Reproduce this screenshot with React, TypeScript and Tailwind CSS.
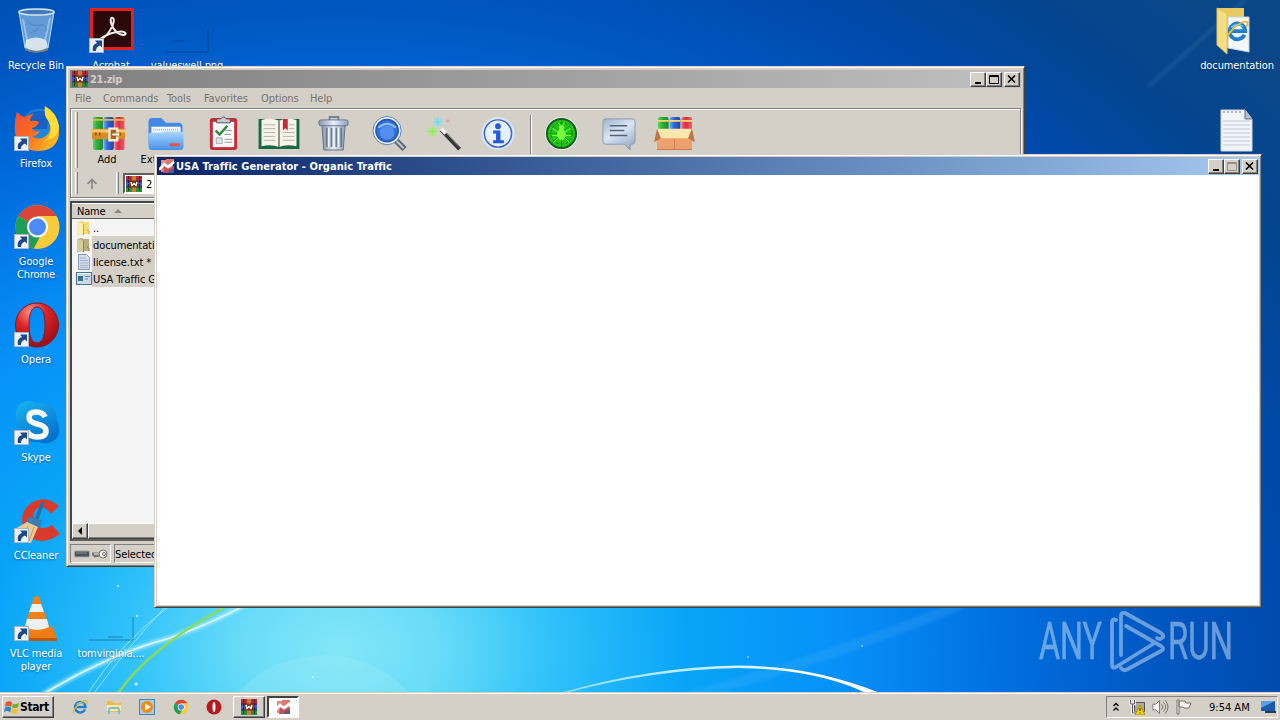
import type { ReactNode } from 'react';
import clsx from 'clsx';

const MENU = [
  { label: 'File', width: 'w-[28px]' },
  { label: 'Commands', width: 'w-[64px]' },
  { label: 'Tools', width: 'w-[37px]' },
  { label: 'Favorites', width: 'w-[57px]' },
  { label: 'Options', width: 'w-[49px]' },
  { label: 'Help', width: 'w-[30px]' },
];

const RAISED = 'bg-[#d4d0c8] border border-t-white border-l-white border-r-[#404040] border-b-[#404040] shadow-[inset_-1px_-1px_0_#808080]';

function ShortcutArrow() {
  return (
    <g>
      <rect x="1.500" y="31.500" width="14" height="14" fill="#eef3fa" stroke="#a9b5c6" />
      <path d="M5 44c-1-5 1-7 4-8L7 33.500h7v7l-2-2c-3 1-4 3-4 5.500z" fill="#1c4a88" />
    </g>
  );
}

function Books() {
  return (
    <svg viewBox="0 0 36 36" className="h-full w-full">
      <rect x="2" y="1" width="10.500" height="34" rx="2" fill="url(#bookgreen)" />
      <rect x="13" y="1" width="10.500" height="34" rx="2" fill="url(#bookblue)" />
      <rect x="24" y="1" width="10.500" height="34" rx="2" fill="url(#bookred)" />
      <path d="M2 4h10.500M13 4h10.500M24 4h10.500" stroke="#e8b93c" strokeWidth="2" />
      <rect x="1" y="13" width="34" height="11" rx="1" fill="#d98a22" />
      <path d="M1 15.500h34" stroke="#fac867" strokeWidth="3" />
      <path d="M5 17v3M9 17v3M30 17v3" stroke="#8d540e" strokeWidth="1.500" />
      <path d="M27 17v-4h-8v12h8v-4" fill="#a96122" stroke="#fdeed2" strokeWidth="2.500" />
      <path d="M22 19h7" stroke="#fff" strokeWidth="2" />
    </svg>
  );
}

function RarIcon() {
  return (
    <svg viewBox="0 0 16 16" className="h-4 w-4 shrink-0">
      <rect width="16" height="16" fill="#2c2440" />
      <rect width="16" height="4.500" fill="#b32942" />
      <rect y="5.500" width="16" height="5" fill="#3b58c4" />
      <rect y="11.500" width="16" height="4.500" fill="#26913b" />
      <path d="M2.500 0v16M13.500 0v16" stroke="#160e22" strokeDasharray="3 1" opacity=".7" />
      <rect x="6" width="4" height="16" fill="#d07a34" />
      <rect x="3.500" y="4.500" width="9" height="7" fill="#7b3214" />
      <path d="M5 6l1 3.500 2-2 2 2L11 6" stroke="#fff" strokeWidth="1.400" fill="none" />
    </svg>
  );
}

function TrafficIcon() {
  return (
    <svg viewBox="0 0 16 16" className="h-4 w-4 shrink-0">
      <rect x="2" y="2" width="12" height="12" fill="#dd8c86" />
      <rect x="7" y="1" width="8" height="5" fill="#e0766a" />
      <path d="M5 9l6 1 4-2v7H4z" fill="#c4525a" />
      <path d="M10 12l5-1v4h-6z" fill="#54598f" />
      <path d="M0 12l5-6 4 3 6-5" stroke="#fff" strokeWidth="2.600" fill="none" />
    </svg>
  );
}

function FolderIcon({ dim = false }: { dim?: boolean }) {
  return (
    <svg viewBox="0 0 16 16" className="h-4 w-4 shrink-0">
      <path d="M1 2l5-1 2 1h5v12H8l-7 1z" fill={dim ? '#b9ae78' : '#f4d978'} />
      <path d="M1 2l6 2v11l-6-1z" fill={dim ? '#d5cda0' : '#fcefaa'} />
      <path d="M7.500 4v11M11 10l2 1v3" stroke={dim ? '#8b8460' : '#c9a545'} fill="none" />
    </svg>
  );
}

function PageIcon() {
  return (
    <svg viewBox="0 0 16 16" className="h-4 w-4 shrink-0">
      <path d="M2.500.500h8l3 3v12h-11z" fill="#d3dce8" stroke="#8a9ab2" />
      <path d="M4 4h6M4 6.500h8M4 9h8M4 11.500h8M4 13.500h8" stroke="#a3b4ca" />
    </svg>
  );
}

function ExeIcon() {
  return (
    <svg viewBox="0 0 16 16" className="h-4 w-4 shrink-0">
      <rect x=".5" y="1.500" width="15" height="12" fill="#c9dbea" stroke="#50708f" />
      <path d="M1 2.500h14" stroke="#e9f4ff" />
      <rect x="2" y="5" width="5" height="5" fill="#3a7386" />
      <path d="M9 5.500h5M9 8h3" stroke="#6788a9" />
    </svg>
  );
}

function TrashIcon() {
  return (
    <svg viewBox="0 0 36 36" className="h-full w-full">
      <path d="M14 4V1h9v3" fill="none" stroke="#77838f" strokeWidth="2" />
      <path d="M6 9h24l-2 26H8z" fill="url(#steel)" stroke="#657282" />
      <path d="M11 12v20M16 12v20M21 12v20M26 12v20" stroke="#6c7d91" strokeWidth="2" />
      <path d="M13 12v20M18 12v20M23 12v20" stroke="#edf5ff" strokeWidth="1.500" />
      <rect x="3" y="4" width="30" height="6" rx="2" fill="url(#steel)" stroke="#68788b" />
    </svg>
  );
}

function ExtractIcon() {
  return (
    <svg viewBox="0 0 38 36" className="h-full w-full">
      <path d="M1 6q0-4 4-4h9l5 5h13q4 0 4 4v17H1z" fill="#4389e4" />
      <path d="M4 11h30v10H4z" fill="#f7fbff" />
      <path d="M6 14h26" stroke="#9bb1ce" strokeWidth="2" strokeDasharray="1 1" />
      <path d="M1 19q1-2 3-2h10l3-1h17q3 0 3 3v12q0 4-4 4H5q-4 0-4-4z" fill="url(#folderblue)" />
      <rect x="23" y="28" width="10" height="3" rx="1" fill="#e65345" />
    </svg>
  );
}

function TestIcon() {
  return (
    <svg viewBox="0 0 36 36" className="h-full w-full">
      <rect x="4" y="2" width="28" height="33" rx="3" fill="#c42b36" />
      <path d="M7 6h22v26H7z" fill="#f8fafb" />
      <path d="M11 7V3h4q3-4 6 0h4v4z" fill="#c8c8cd" stroke="#54545c" />
      <path d="M10 15l4 4 8-9" fill="none" stroke="#31843b" strokeWidth="2.500" />
      <path d="M20 15h7M19 19h7M19 24h8M19 27h8" stroke="#93999f" />
      <rect x="10.500" y="22.500" width="6" height="6" fill="#e2e5e8" stroke="#a7adb2" />
    </svg>
  );
}

function BookIcon() {
  return (
    <svg viewBox="0 0 44 36" className="h-full w-full">
      <path d="M1 3h42v31H1z" fill="#176944" />
      <path d="M4 4q11-3 18 1 7-4 18-1v27q-11-2-18 1-7-3-18-1z" fill="#f6f4e9" />
      <path d="M22 5v27" stroke="#918f83" strokeWidth="2" />
      <path d="M6 9h12M6 13h12M6 17h12M6 21h12M6 25h12M26 17h12M26 21h12M26 25h12M32 9h6M32 13h6" stroke="#b2b5ac" />
      <path d="M26 3h5v12l-2.500-2.500L26 15z" fill="#c92a36" />
    </svg>
  );
}

function FindIcon() {
  return (
    <svg viewBox="0 0 36 36" className="h-full w-full">
      <path d="M24 24l10 10" stroke="#626b77" strokeWidth="6" />
      <path d="M24 24l9 9" stroke="#c6cbd1" strokeWidth="2" />
      <circle cx="16" cy="15" r="14.500" fill="#e9f2fc" stroke="#5f7fb4" />
      <circle cx="16" cy="15" r="11.500" fill="#2f6fdc" stroke="#2355ae" strokeWidth="1.500" />
      <circle cx="16" cy="17" r="7.500" fill="#5f9df0" opacity=".7" />
      <path d="M7 12q9-8 18 0" fill="none" stroke="#8dbcf8" strokeWidth="2" />
    </svg>
  );
}

function WizardIcon() {
  return (
    <svg viewBox="0 0 36 36" className="h-full w-full">
      <circle cx="6" cy="16" r="5" fill="#a8f36a" opacity=".5" />
      <circle cx="12" cy="6" r="4" fill="#70eff5" opacity=".5" />
      <path d="M12 1v10M7 6h10M8 2l8 8M16 2l-8 8" stroke="#72dbeb" />
      <path d="M6 11v10M1 16h10M3 13l6 6M9 13l-6 6" stroke="#91e861" />
      <path d="M22 3v4M20 5h4" stroke="#f08b9b" />
      <path d="M15 14l19 20" stroke="#353535" strokeWidth="4" />
      <path d="M15 13l5 5" stroke="#eee" strokeWidth="4" />
      <path d="M20 17l14 15" stroke="#969696" />
    </svg>
  );
}

function InfoIcon() {
  return (
    <svg viewBox="0 0 36 36" className="h-full w-full">
      <circle cx="18" cy="18" r="17" fill="#d7e5f8" />
      <circle cx="18" cy="18" r="14" fill="#e6f0ff" stroke="#3f65bd" strokeWidth="1.500" />
      <circle cx="18" cy="10.500" r="3" fill="#275bdc" />
      <path d="M13 15h7.500v10H24v3H13v-3h3v-7h-3z" fill="#2459da" />
    </svg>
  );
}

function VirusIcon() {
  return (
    <svg viewBox="0 0 36 36" className="h-full w-full">
      <circle cx="18" cy="18" r="17" fill="#e2eee0" />
      <circle cx="18" cy="18" r="15" fill="#23c719" stroke="#155a23" strokeWidth="2" />
      <g stroke="#087c0d" fill="none">
        <circle cx="18" cy="18" r="11" strokeDasharray="3 2" />
        <path d="M18 3v30M3 18h30M8 8l20 20M28 8L8 28" opacity=".5" />
      </g>
      <g stroke="#7bfc42" fill="#7bfc42">
        <ellipse cx="18" cy="19" rx="4" ry="5.500" />
        <circle cx="18" cy="12" r="2.200" />
        <path d="M14 16l-5-3M22 16l5-3M14 20H8M22 20h6M14 23l-4 4M22 23l4 4M17 10l-2-3M19 10l2-3" fill="none" />
      </g>
    </svg>
  );
}

function CommentIcon() {
  return (
    <svg viewBox="0 0 36 36" className="h-full w-full">
      <path d="M5 3h27q3 0 3 3v20q0 3-3 3h-2v6l-6-6H5q-3 0-3-3V6q0-3 3-3z" fill="url(#bubble)" stroke="#899bb2" />
      <path d="M9 10h18M9 15h15M9 20h18" stroke="#51647e" strokeWidth="1.500" />
    </svg>
  );
}

function SfxIcon() {
  return (
    <svg viewBox="0 0 42 36" className="h-full w-full">
      <rect x="4" y="1" width="11" height="15" rx="2" fill="url(#bookgreen)" />
      <rect x="16" y="1" width="11" height="15" rx="2" fill="url(#bookblue)" />
      <rect x="28" y="1" width="11" height="15" rx="2" fill="url(#bookred)" />
      <path d="M4 5h11M16 5h11M28 5h11" stroke="#ffd66b" strokeWidth="2" />
      <path d="M3 16h36v19H3z" fill="#eea06e" />
      <path d="M3 13h36l-4 10H7z" fill="#fde7ad" />
      <path d="M3 13l4 10-7 4zM39 13l-4 10 7 4z" fill="#bd754b" />
      <path d="M21 24v11M3 34.500h36" stroke="#c87c50" />
    </svg>
  );
}

// Only the first two buttons carry a caption, the rest of that row sits under the browser window.
const TOOLS: { icon: ReactNode; label?: string; width: string; size: string }[] = [
  { icon: <Books />, label: 'Add', width: 'w-[58px]', size: 'w-[35px]' },
  { icon: <ExtractIcon />, label: 'Extract To', width: 'w-[58px]', size: 'w-[38px]' },
  { icon: <TestIcon />, width: 'w-[57px]', size: 'w-[35px]' },
  { icon: <BookIcon />, width: 'w-[53px]', size: 'w-[44px]' },
  { icon: <TrashIcon />, width: 'w-[57px]', size: 'w-[35px]' },
  { icon: <FindIcon />, width: 'w-[53px]', size: 'w-[36px]' },
  { icon: <WizardIcon />, width: 'w-[58px]', size: 'w-[36px]' },
  { icon: <InfoIcon />, width: 'w-[50px]', size: 'w-[36px]' },
];

const EXTRA_TOOLS = [
  { icon: <VirusIcon />, width: 'w-[57px]', size: 'w-[35px]' },
  { icon: <CommentIcon />, width: 'w-[57px]', size: 'w-[35px]' },
  { icon: <SfxIcon />, width: 'w-[54px]', size: 'w-[41px]' },
];

function Tool({ icon, label, width, size }: (typeof TOOLS)[number]) {
  return (
    <div className={clsx('flex shrink-0 flex-col items-center', width)}>
      <div className={clsx('mt-px ml-[2px] h-[35px]', size)}>{icon}</div>
      {label && <span className="mt-[2px] leading-[13px] whitespace-nowrap">{label}</span>}
    </div>
  );
}

function Caption({ kind, disabled = false }: { kind: 'min' | 'max' | 'close'; disabled?: boolean }) {
  return (
    <div className={clsx('flex h-[15px] w-4 items-center justify-center', RAISED)}>
      <svg viewBox="0 0 12 11" className="h-[11px] w-3" fill="none" stroke={disabled ? '#969087' : '#000'}>
        {kind === 'min' && <path d="M3 9h6" strokeWidth="2" />}
        {kind === 'max' && <path d="M1.500 1.500h9v8h-9zM1 2.500h10" />}
        {kind === 'close' && <path d="M2 1.500l7 7M9 1.500l-7 7" strokeWidth="1.600" />}
      </svg>
    </div>
  );
}

function Captions({ maxDisabled = false }: { maxDisabled?: boolean }) {
  return (
    <div className="ml-auto flex pr-px">
      <Caption kind="min" />
      <Caption kind="max" disabled={maxDisabled} />
      <div className="w-[2px]" />
      <Caption kind="close" />
    </div>
  );
}

function FileRow({ icon, name, selected = false }: { icon: ReactNode; name: string; selected?: boolean }) {
  return (
    <div className="flex h-[17px] items-center pl-1">
      {icon}
      <span className={clsx('h-[17px] flex-1 pl-px leading-[20px] tracking-[-0.100px] whitespace-nowrap', selected && 'bg-[#d4d0c8]')}>{name}</span>
    </div>
  );
}

function ArchiveWindow() {
  return (
    <div className="absolute top-[66px] left-[66px] flex h-[501px] w-[959px] flex-col overflow-hidden border border-t-[#d4d0c8] border-r-[#404040] border-b-[#404040] border-l-[#d4d0c8] bg-[#d4d0c8] p-[3px] shadow-[inset_1px_1px_0_#fff,inset_-1px_-1px_0_#808080]">
      <div className="flex h-[18px] shrink-0 items-center bg-linear-to-r from-[#808080] to-[#c0c0c0] pl-[2px] font-bold text-[#d4d0c8]">
        <RarIcon />
        <span className="ml-[2px] tracking-[-0.300px]">21.zip</span>
        <Captions />
      </div>
      <div className="flex h-5 shrink-0 items-center pl-[5px] tracking-[-0.080px] text-[#77736c]">
        {MENU.map((item) => (
          <span key={item.label} className={clsx('whitespace-nowrap', item.width)}>
            {item.label}
          </span>
        ))}
      </div>
      <div className="flex h-[90px] shrink-0 flex-col border border-[#808080] shadow-[inset_1px_1px_0_#fff,1px_1px_0_#fff]">
        <div className="flex h-[61px] pt-[6px] pl-1">
          <div className="mt-[-3px] h-14 w-[3px] border-r border-l border-r-[#808080] border-l-white" />
          {TOOLS.map((tool, i) => (
            <Tool key={i} {...tool} />
          ))}
          <div className="ml-2 h-[52px] w-[2px] border-r border-l border-r-white border-l-[#808080]" />
          {EXTRA_TOOLS.map((tool, i) => (
            <Tool key={i} {...tool} />
          ))}
        </div>
        <div className="flex h-[26px] items-center pl-1">
          <div className="h-[22px] w-[3px] border-r border-l border-r-[#808080] border-l-white" />
          <svg viewBox="0 0 12 12" className="mt-[2px] ml-2 h-3 w-3" fill="none" stroke="#8b8781" strokeWidth="1.700">
            <path d="M6 11V1M1.500 6L6 1.500 10.500 6" />
          </svg>
          <div className="ml-[18px] h-[22px] w-[3px] border-r border-l border-r-[#808080] border-l-white" />
          <div className="mt-px ml-[4px] flex h-[21px] flex-1 items-center border-2 border-t-[#606060] border-r-white border-b-white border-l-[#606060] bg-white pl-px">
            <RarIcon />
            <span className="mt-px ml-[4px] tracking-[1px] whitespace-nowrap">21.zip</span>
          </div>
        </div>
      </div>
      <div className="mt-[3px] flex h-[340px] shrink-0 flex-col border-2 border-t-[#404850] border-r-white border-b-[#606060] border-l-[#404850] bg-[#f5f5f5]">
        <div className="flex h-[16px] shrink-0 items-center border-b border-b-[#606060] bg-[#d4d0c8] pl-[5px] shadow-[inset_0_1px_0_#fff]">
          <span className="pt-[2px] tracking-[-0.200px]">Name</span>
          <svg viewBox="0 0 8 4" className="ml-[9px] h-1 w-2">
            <path d="M0 4l4-4 4 4z" fill="#8b8780" />
          </svg>
        </div>
        <FileRow icon={<FolderIcon />} name=".." />
        <FileRow icon={<FolderIcon dim />} name="documentation" selected />
        <FileRow icon={<PageIcon />} name="license.txt *" selected />
        <FileRow icon={<ExeIcon />} name="USA Traffic Generator" selected />
        <div className="mt-auto flex h-4 shrink-0 bg-[#ece9e4]">
          <div className={clsx('flex w-4 items-center justify-center', RAISED)}>
            <svg viewBox="0 0 4 8" className="h-2 w-1">
              <path d="M4 0v8L0 4z" fill="#000" />
            </svg>
          </div>
          <div className={clsx('w-[500px]', RAISED)} />
        </div>
      </div>
      <div className="mt-[3px] flex h-[19px] shrink-0 gap-[3px]">
        <div className="flex w-[41px] items-center gap-[2px] border border-t-[#808080] border-r-white border-b-white border-l-[#808080] pl-[3px]">
          <svg viewBox="0 0 16 8" className="h-2 w-4">
            <rect x=".5" y="1" width="15" height="6" rx="1" fill="#4b5558" stroke="#a3abad" />
            <path d="M2 3h11" stroke="#849195" />
          </svg>
          <svg viewBox="0 0 16 10" className="h-[10px] w-4" fill="none">
            <path d="M9 5H1l2 2 2-1 2 1" stroke="#77736e" strokeWidth="3" />
            <path d="M9 5H2" stroke="#fff" />
            <circle cx="11" cy="5" r="4" fill="#f2f0ec" stroke="#77736e" />
            <circle cx="12" cy="5" r="1.500" stroke="#77736e" />
          </svg>
        </div>
        <div className="flex-1 border border-t-[#808080] border-r-white border-b-white border-l-[#808080] leading-[19px] tracking-[-0.100px] whitespace-nowrap">
          Selected
        </div>
      </div>
    </div>
  );
}

function TrafficWindow() {
  return (
    <div className="absolute top-[154px] left-[154px] flex h-[454px] w-[1108px] flex-col border border-t-[#d4d0c8] border-r-[#404040] border-b-[#404040] border-l-[#d4d0c8] bg-[#d4d0c8] p-[2px] shadow-[inset_1px_1px_0_#fff,inset_-1px_-1px_0_#808080]">
      <div className="flex h-[18px] shrink-0 items-center bg-linear-to-r from-[#0a246a] to-[#a6caf0] pl-[2px] font-bold text-white">
        <TrafficIcon />
        <span className="ml-px tracking-[0.050px] whitespace-nowrap">USA Traffic Generator - Organic Traffic</span>
        <Captions maxDisabled />
      </div>
      <div className="flex-1 bg-white" />
    </div>
  );
}

function Wallpaper() {
  return (
    <svg viewBox="0 0 1280 720" className="absolute inset-0 h-[720px] w-[1280px]">
      <defs>
        <radialGradient id="sky" gradientUnits="userSpaceOnUse" cx="0" cy="0" r="1" gradientTransform="translate(340 650) scale(1200 936)">
          <stop offset="0" stopColor="#83e6f7" />
          <stop offset=".083" stopColor="#68dcf8" />
          <stop offset=".175" stopColor="#31c2fa" />
          <stop offset=".29" stopColor="#08a4f8" />
          <stop offset=".42" stopColor="#0790f7" />
          <stop offset=".55" stopColor="#0070e0" />
          <stop offset=".68" stopColor="#0057c2" />
          <stop offset=".79" stopColor="#004aac" />
          <stop offset=".89" stopColor="#034590" />
          <stop offset="1" stopColor="#0b4788" />
        </radialGradient>
        <linearGradient id="arc">
          <stop stopColor="#8fdcff" />
          <stop offset=".6" stopColor="#d8f4ff" />
          <stop offset=".75" stopColor="#fff" />
        </linearGradient>
        <linearGradient id="steel" x2="1">
          <stop stopColor="#8396ad" />
          <stop offset=".5" stopColor="#e6effa" />
          <stop offset="1" stopColor="#8da1bd" />
        </linearGradient>
        <linearGradient id="bubble" x2=".6" y2="1">
          <stop stopColor="#9fb3cc" />
          <stop offset=".5" stopColor="#dbe6f4" />
          <stop offset="1" stopColor="#9fb3cf" />
        </linearGradient>
        <linearGradient id="bookgreen">
          <stop stopColor="#5fd65a" />
          <stop offset=".4" stopColor="#2fae3c" />
          <stop offset="1" stopColor="#1c8a33" />
        </linearGradient>
        <linearGradient id="bookblue">
          <stop stopColor="#6fa8fa" />
          <stop offset=".4" stopColor="#2f66dc" />
          <stop offset="1" stopColor="#1f479f" />
        </linearGradient>
        <linearGradient id="bookred">
          <stop stopColor="#ff6f7c" />
          <stop offset=".4" stopColor="#dc2c44" />
          <stop offset="1" stopColor="#e8606c" />
        </linearGradient>
        <linearGradient id="folderblue" x2="0" y2="1">
          <stop stopColor="#a9d6ff" />
          <stop offset="1" stopColor="#4790e8" />
        </linearGradient>
        <radialGradient id="operared" cx=".35" cy=".2" r=".9">
          <stop stopColor="#ff9184" />
          <stop offset=".4" stopColor="#dc2428" />
          <stop offset="1" stopColor="#8f0b12" />
        </radialGradient>
        <linearGradient id="fox" x2="1" y2=".6">
          <stop stopColor="#f0503a" />
          <stop offset=".5" stopColor="#ff6a1e" />
          <stop offset="1" stopColor="#ffb624" />
        </linearGradient>
        <linearGradient id="skype" x2=".6" y2="1">
          <stop stopColor="#19b4ee" />
          <stop offset="1" stopColor="#0672cf" />
        </linearGradient>
        <filter id="soft">
          <feGaussianBlur stdDeviation="1.500" />
        </filter>
        <filter id="glow">
          <feGaussianBlur stdDeviation=".6" />
        </filter>
      </defs>
      <rect width="1280" height="720" fill="url(#sky)" />
      <g fill="none" strokeLinecap="round">
        <path d="M690 696Q825 660 960 605" stroke="#55b8ff" strokeWidth="10" opacity=".2" filter="url(#soft)" />
        <path d="M1150 85L1245 0" stroke="#75b4dd" strokeWidth="4" opacity=".12" filter="url(#soft)" />
        <path d="M45 693Q110 654 170 638Q214 623 260 597" stroke="#baf3ff" strokeWidth="5" opacity=".65" filter="url(#soft)" />
        <path d="M45 693Q110 654 170 638Q214 623 260 597" stroke="#dffaff" strokeWidth="1.500" />
        <path d="M88 693Q120 643 172 604M94 693Q125 651 165 607" stroke="#a9eaff" opacity=".8" />
        <path d="M119 692Q150 648 223 608" stroke="#8fda4f" strokeWidth="2.500" />
      </g>
      <path d="M560 693Q650 667 738 665.500C790 666 835 675 880 693L866 693C832 677 792 669 738 668Q650 670 566 693z" fill="url(#arc)" filter="url(#glow)" />
      <path d="M238 692Q270 657 325 655Q375 656 408 692z" fill="#b6f2fa" opacity=".2" />
      <g fill="#d9faff">
        <circle cx="118" cy="586" r="1" />
        <circle cx="137" cy="616" r="1" />
        <circle cx="136" cy="684" r="1.500" />
        <circle cx="313" cy="677" r="1" />
        <circle cx="748" cy="657" r="1" opacity=".6" />
        <circle cx="862" cy="646" r="1" opacity=".6" />
      </g>
    </svg>
  );
}

function Ie() {
  return (
    <g fill="none">
      <path d="M26 21a10.500 10.500 0 1 1 1-5H9" stroke="#1c7fd0" strokeWidth="5" />
      <path d="M8 11q8-7 16-1" stroke="#6cc8f5" strokeWidth="2" />
      <path d="M4 28C-3 25 20 0 30 4q1 3-2 6" stroke="#e9b932" strokeWidth="2.500" />
    </g>
  );
}

function Chrome() {
  return (
    <g>
      <circle cx="24.500" cy="24" r="22" fill="#f9cb3c" />
      <path d="M24.500 24L5.500 13a22 22 0 0 1 38 0h-19z" fill="#dc4437" />
      <path d="M24.500 24l-19-11a22 22 0 0 0 15 33l9-17z" fill="#209d58" />
      <circle cx="24.500" cy="24" r="10.500" fill="#fff" />
      <circle cx="24.500" cy="24" r="8.500" fill="#4c8bf5" />
    </g>
  );
}

function Opera() {
  return <path fillRule="evenodd" fill="url(#operared)" stroke="#8a1719" d="M24 2a21.500 22 0 1 0 0 44 21.500 22 0 1 0 0-44m0 4c5 0 8 6 8 18s-3 18-8 18-8-6-8-18 3-18 8-18" />;
}

const DESKTOP: { label?: string; pos: string; icon: ReactNode; shortcut?: boolean }[] = [
  {
    label: 'Recycle Bin',
    pos: 'left-[-14px] top-[7px]',
    icon: (
      <g>
        <path d="M6 5q17-5 35 0l-6 36q-11 7-23 0z" fill="#a4cbea" fillOpacity=".6" stroke="#b8daf1" />
        <path d="M13 33q10-5 20 0l2 7q-12 8-23 0z" fill="#e5eaed" opacity=".9" />
        <ellipse cx="23.500" cy="5" rx="17.500" ry="3" fill="#4578b4" stroke="#d3eaf8" strokeWidth="1.500" />
        <path d="M10 12l5 26M37 11l-6 27" stroke="#e4f4ff" strokeWidth="2" opacity=".4" />
        <path d="M14 14q6 6 12 4t8 6M18 26l8-5" stroke="#2c62a4" fill="none" opacity=".4" />
        <path d="M12 42q12 6 23 0" stroke="#6f7b84" strokeWidth="2" fill="none" />
      </g>
    ),
  },
  {
    label: 'Acrobat',
    pos: 'left-[61px] top-[7px]',
    shortcut: true,
    icon: (
      <g>
        <rect x="2" y="1" width="44" height="42" fill="#e4221b" />
        <rect x="5" y="4" width="38" height="36" fill="#2a0708" />
        <path d="M12 33c9-4 16-19 13-22-5-3-2 15 10 17 5 0 3-5-6-3-8 1-17 6-17 8z" fill="none" stroke="#f4eeee" strokeWidth="2" />
      </g>
    ),
  },
  {
    label: 'valueswell.png',
    pos: 'left-[137px] top-[7px]',
    icon: <path d="M1 45h43V22M9 34h11" fill="none" stroke="#06337c" opacity=".65" />,
  },
  {
    label: 'Firefox',
    pos: 'left-[-14px] top-[105px]',
    shortcut: true,
    icon: (
      <g>
        <circle cx="26" cy="21" r="17" fill="#1a86e0" />
        <path d="M12 12Q22 3 36 7L34 24H16z" fill="#1a5fc4" />
        <path d="M4 7q5 5 8 5 4-3 9-3-4 3-4 7 6-1 9 1-2 5-7 6 1 4 8 3-3 5-8 5 8 6 16-2Q41 20 32 5q15 9 14 24-2 17-22 17Q6 45 2 28 1 16 4 7z" fill="url(#fox)" />
        <path d="M32 1q-2 9 4 16 5 12-5 19Q46 33 46 21 44 8 32 1z" fill="#ffdc36" />
      </g>
    ),
  },
  { label: 'Google Chrome', pos: 'left-[-14px] top-[203px]', shortcut: true, icon: <Chrome /> },
  { label: 'Opera', pos: 'left-[-14px] top-[301px]', shortcut: true, icon: <Opera /> },
  {
    label: 'Skype',
    pos: 'left-[-14px] top-[399px]',
    shortcut: true,
    icon: (
      <g>
        <path d="M5 7Q14-1 24 4q19-1 20 17 5 12-1 19-8 7-17 3Q8 45 5 27 0 15 5 7z" fill="url(#skype)" />
        <path d="M32 18q-2-5-9-5-7 0-7 5.500 0 4.500 8 6.500 9 2 9 7 0 6-9 6-7 0-10-6" fill="none" stroke="#fff" strokeWidth="5.500" />
      </g>
    ),
  },
  {
    label: 'CCleaner',
    pos: 'left-[-14px] top-[497px]',
    shortcut: true,
    icon: (
      <g>
        <path d="M46 9Q32-3 18 6 4 17 12 35q14 17 35 2l-8-9q-9 7-16-1-6-10 2-16 7-3 13 6z" fill="#d83a2c" />
        <path d="M30 5L22 26" stroke="#246fa8" strokeWidth="3.500" />
        <path d="M15 20l14 3-2 8-14-5z" fill="#397fb3" />
        <path d="M14 25l11 5-7 16H5L2 32z" fill="#eccb96" />
        <path d="M15 29l-4 13M21 30l-5 14" stroke="#c99a58" />
      </g>
    ),
  },
  {
    label: 'VLC media player',
    pos: 'left-[-14px] top-[595px]',
    shortcut: true,
    icon: (
      <g>
        <path d="M11 32h29l4 13H5z" fill="#ed7d12" />
        <path d="M5 43h39v3H5z" fill="#bf570d" />
        <path d="M21 2q3-2 5 0l11 32q-12 8-26 0z" fill="#f38018" />
        <path d="M19 9h9l3 8H16zM14 24h20l2 8q-12 6-24 0z" fill="#edf0f0" />
      </g>
    ),
  },
  {
    label: 'tomvirginia....',
    pos: 'left-[61px] top-[595px]',
    icon: <path d="M1 45h44V22M20 42h15" fill="none" stroke="#176f9d" opacity=".75" />,
  },
  {
    label: 'documentation',
    pos: 'left-[1187px] top-[7px]',
    icon: (
      <g>
        <path d="M3 1h27v40H12z" fill="#e8ca61" />
        <path d="M14 10h21v35l-21-4z" fill="#f5f8fa" stroke="#c2d0da" />
        <g transform="translate(11 12) scale(.75)">
          <Ie />
        </g>
        <path d="M3 1l10 5v41L3 38z" fill="#f6dd83" stroke="#e3c34b" />
      </g>
    ),
  },
  {
    pos: 'left-[1187px] top-[105px]',
    icon: (
      <g>
        <path d="M7 5h24l7 9v32H7z" fill="#f1f5fa" stroke="#d0d5de" />
        <path d="M31 5v9h7" fill="#b4bbc5" stroke="#697582" />
        <path d="M9 7h19" stroke="#6e7781" strokeDasharray="2 2" />
        <path d="M9 16h27M9 20h27M9 24h27M9 28h27M9 32h27M9 36h27M9 40h27" stroke="#c0c8d3" />
      </g>
    ),
  },
];

function DesktopIcon({ label, pos, icon, shortcut }: (typeof DESKTOP)[number]) {
  return (
    <div className={clsx('absolute flex w-[100px] flex-col items-center text-center text-white', pos)}>
      <svg viewBox="0 0 48 48" className="ml-[2px] h-12 w-12">
        {icon}
        {shortcut && <ShortcutArrow />}
      </svg>
      {label && (
        <span className="mt-[4px] w-[74px] leading-[13px] tracking-[-0.100px] [text-shadow:0_1px_2px_#00204080]">{label}</span>
      )}
    </div>
  );
}

function Watermark() {
  return (
    <svg viewBox="0 0 240 66" className="absolute top-[608px] left-[1035px] h-[66px] w-[240px] opacity-50" fill="#d3e4f8">
      <g fontFamily="Roboto, sans-serif" fontSize="51" stroke="#d3e4f8" strokeWidth=".5">
        <text x="4" y="51" textLength="63" lengthAdjust="spacingAndGlyphs">ANY</text>
        <text x="133" y="51" textLength="65" lengthAdjust="spacingAndGlyphs">RUN</text>
      </g>
      <g fill="none" stroke="#d3e4f8" strokeWidth="3.800" strokeLinecap="round" strokeLinejoin="round">
        <path d="M86 47V8q0-4 4-3l36 20q4 3 1 5-2 2-5 0" />
        <path d="M81 12q-4-2-4 3v42q0 4 4 2l37-23" />
        <path d="M91 18l35 20q4 3 0 5L91 62q-3 1-5-2" />
      </g>
    </svg>
  );
}

function Taskbar() {
  return (
    <div className="absolute inset-x-0 bottom-0 flex h-7 items-center bg-[#d4d0c8] pl-[2px] shadow-[inset_0_1px_0_#d4d0c8,inset_0_2px_0_#fff]">
      <div className={clsx('mt-[2px] flex h-[22px] w-[52px] items-center pl-px text-[12px] font-bold', RAISED)}>
        <svg viewBox="0 0 18 16" className="h-4 w-4 shrink-0">
          <path d="M2 3q4-3 7 0L8 8Q5 5 1 8z" fill="#e65329" />
          <path d="M10 4q4 2 7-1l-1 5q-4 3-7 0z" fill="#71ae31" />
          <path d="M1 9q4-3 7 0l-1 5q-4-3-7 0z" fill="#2887cb" />
          <path d="M9 9q4 3 7 0l-1 5q-4 3-7 0z" fill="#f4bd2a" />
        </svg>
        <span className="tracking-[-0.400px]">Start</span>
      </div>
      <div className="mt-[2px] ml-[18px] flex gap-[17.500px]">
        <svg viewBox="0 0 32 32" className="h-4 w-4">
          <Ie />
        </svg>
        <svg viewBox="0 0 16 16" className="h-4 w-4">
          <path d="M1 2h5l1 2h8v9H1z" fill="#e9bd44" />
          <path d="M1 6h14v6H1z" fill="#ffec9e" />
          <path d="M3 15v-4q0-2 2-2h6q2 0 2 2v4" fill="none" stroke="#7dbbe0" strokeWidth="2" />
        </svg>
        <svg viewBox="0 0 16 16" className="h-4 w-4">
          <rect x=".5" y=".5" width="15" height="15" fill="#a7cce7" stroke="#3b88bd" />
          <circle cx="8" cy="8" r="6" fill="#f28b14" />
          <path d="M6 4.500L12 8l-6 3.500z" fill="#fff" />
        </svg>
        <svg viewBox="0 0 48 48" className="h-4 w-4">
          <Chrome />
        </svg>
        <svg viewBox="0 0 16 16" className="h-4 w-4">
          <circle cx="8" cy="8" r="7.500" fill="#b7191f" />
          <ellipse cx="8" cy="8" rx="1.500" ry="5" fill="#fff" />
        </svg>
      </div>
      <div className={clsx('mt-[2px] ml-[11px] flex h-[22px] w-8 items-center justify-center', RAISED)}>
        <RarIcon />
      </div>
      <div className="mt-[2px] ml-[2px] flex h-[22px] w-8 items-center justify-center border-2 border-t-[#404040] border-r-white border-b-white border-l-[#404040] bg-white">
        <TrafficIcon />
      </div>
      <div className="mt-[2px] mr-[2px] ml-auto flex h-[22px] w-[172px] items-center border border-t-[#808080] border-r-white border-b-white border-l-[#808080] pl-[5px]">
        <svg viewBox="0 0 8 10" className="h-[10px] w-2" fill="none" stroke="#000" strokeWidth="1.300">
          <path d="M1.500 4L4 1.500 6.500 4M1.500 8.500L4 6l2.500 2.500" />
        </svg>
        <svg viewBox="0 0 16 16" className="ml-[9px] h-4 w-4 shrink-0">
          <path d="M5.500 3.500h10v9h-10z" fill="#aaa89f" stroke="#555" />
          <path d="M1.500 1v4h4V1M3.500 5v9h4" fill="none" stroke="#fff" strokeWidth="2.500" />
          <path d="M1.500 1v4h4V1M3.500 5v9h4" fill="none" stroke="#555" />
          <path d="M11 6l5 10H6z" fill="#f4d90b" stroke="#a58d08" />
          <path d="M11 9v3M11 13.500v1" stroke="#000" />
        </svg>
        <svg viewBox="0 0 18 16" className="ml-[7px] h-4 w-[17px] shrink-0" fill="#f8f7f4" stroke="#77736c">
          <path d="M1 5h3l4-4v14l-4-4H1z" />
          <path d="M10 5q3 3 0 6M12 3q5 5 0 10M14 1q6 7 0 14" fill="none" />
        </svg>
        <svg viewBox="0 0 16 16" className="ml-[7px] h-4 w-4 shrink-0" fill="#f8f7f4" stroke="#77736c">
          <path d="M1 1h2v14H1zM3 2h6l1 2h5l-2 5H8L7 8H3z" />
        </svg>
        <span className="ml-[17px] w-[51px] shrink-0 tracking-[0px] whitespace-nowrap">9:54 AM</span>
        <svg viewBox="0 0 16 14" className="h-[14px] w-4 shrink-0">
          <path d="M1 1h14v10H1z" fill="#1858ad" />
          <path d="M1 1h14L1 8z" fill="#5b9ee1" />
          <path d="M5 12h11" stroke="#253d5a" strokeWidth="2" />
        </svg>
      </div>
    </div>
  );
}

export default function App() {
  return (
    <div className="relative h-[720px] w-[1280px] overflow-hidden font-['DejaVu_Sans_Condensed','DejaVu_Sans',sans-serif] text-[11px] leading-[13px] text-black">
      <Wallpaper />
      {DESKTOP.map((item) => (
        <DesktopIcon key={item.pos} {...item} />
      ))}
      <ArchiveWindow />
      <TrafficWindow />
      <Watermark />
      <Taskbar />
    </div>
  );
}
